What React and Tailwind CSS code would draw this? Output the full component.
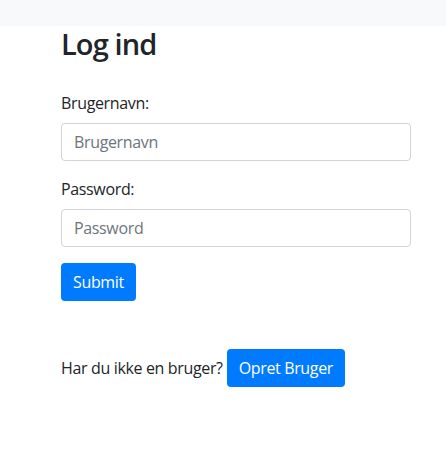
export default function App() {
  return (
    <div className="min-h-[455px] bg-white text-[#212529] font-['Open_Sans',sans-serif] text-[16px] leading-6 tracking-[-0.35px]">
      <div className="h-[26px] bg-[#f8f9fa]" />
      <div className="pl-[61px]">
        <h2 className="text-[29px] leading-9 font-semibold tracking-[-0.9px]">Log ind</h2>

        <form className="mt-[29px] w-[350px]" onSubmit={(e) => e.preventDefault()}>
          <div className="mb-4">
            <label className="block mb-2">Brugernavn:</label>
            <input
              type="text"
              placeholder="Brugernavn"
              className="w-full h-[38px] px-3 py-1.5 border border-[#ced4da] rounded-[4px] placeholder:text-[#6c757d] focus:outline-none"
            />
          </div>
          <div className="mb-4">
            <label className="block mb-2">Password:</label>
            <input
              type="password"
              placeholder="Password"
              className="w-full h-[38px] px-3 py-1.5 border border-[#ced4da] rounded-[4px] placeholder:text-[#6c757d] focus:outline-none"
            />
          </div>
          <button
            type="submit"
            className="h-[38px] px-3 bg-[#007bff] text-white rounded-[4px]"
          >
            Submit
          </button>
        </form>

        <div className="mt-[48px] flex items-center">
          <span>Har du ikke en bruger?</span>
          <button className="ml-[4px] h-[38px] px-3 bg-[#007bff] text-white rounded-[4px]">
            Opret Bruger
          </button>
        </div>
      </div>
    </div>
  );
}
